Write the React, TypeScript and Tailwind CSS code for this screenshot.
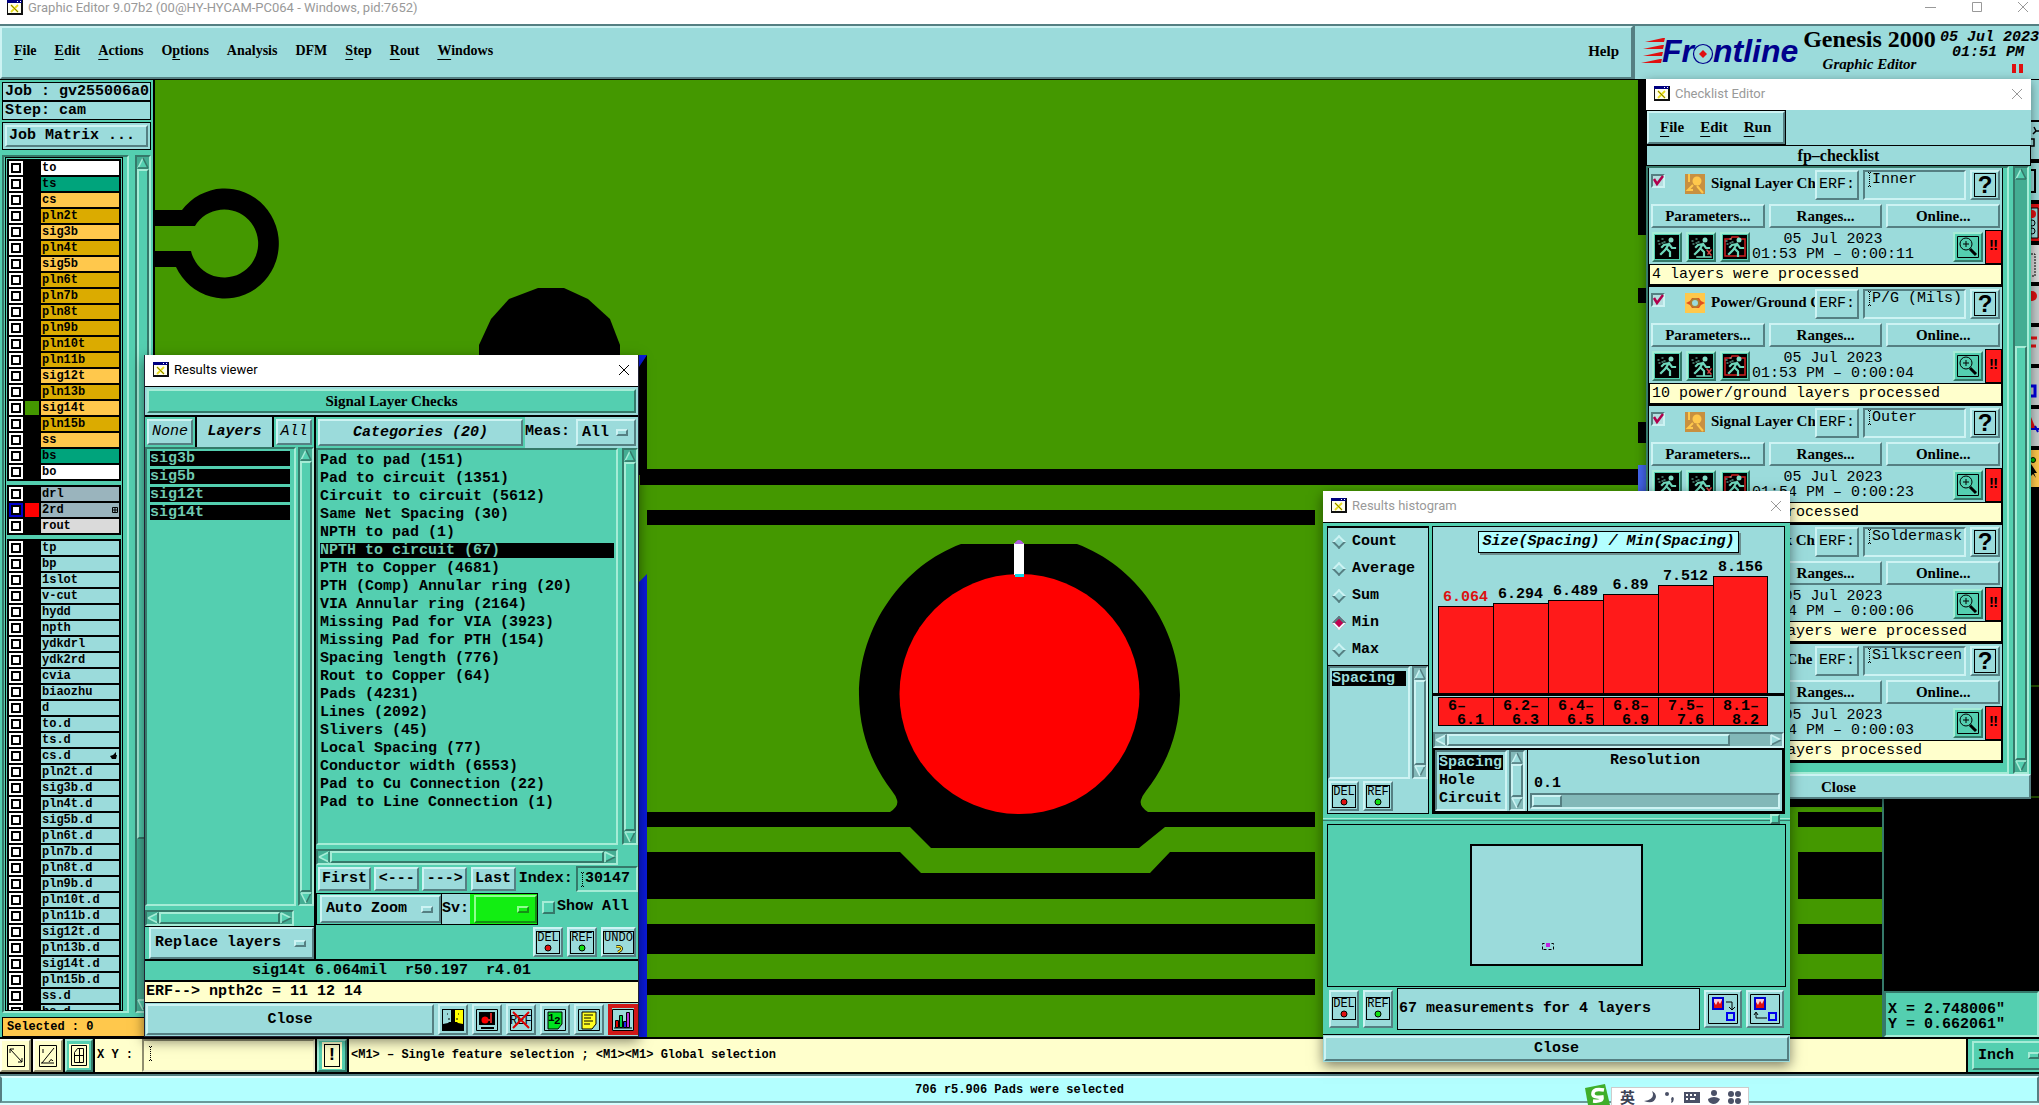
import React, { FunctionComponent } from "react";
import clsx from "clsx";

const tealRaised =
  "border-2 border-t-[#cdf3f3] border-l-[#cdf3f3] border-b-[#557f82] border-r-[#557f82] bg-[#9bdbdb]";
const tealSunken =
  "border-2 border-t-[#557f82] border-l-[#557f82] border-b-[#cdf3f3] border-r-[#cdf3f3]";
const greenRaised =
  "border-2 border-t-[#a5ecd6] border-l-[#a5ecd6] border-b-[#35796a] border-r-[#35796a] bg-[#54cfb0]";
const greenSunken =
  "border-2 border-t-[#35796a] border-l-[#35796a] border-b-[#a5ecd6] border-r-[#a5ecd6]";
const creamRaised =
  "border-2 border-t-[#ffffee] border-l-[#ffffee] border-b-[#908f70] border-r-[#908f70] bg-[#ffffcc]";
const serif = "font-['Liberation_Serif',serif]";
const sans = "font-['Roboto','Noto_Sans_CJK_SC',sans-serif] font-normal";

const WindowIcon: FunctionComponent = () => (
  <svg width="16" height="15" viewBox="0 0 16 15" className="shrink-0">
    <rect width="16" height="15" fill="#111" />
    <rect x="1" y="3" width="13" height="10" fill="#fffff0" />
    <rect x="0" y="0" width="15" height="3" fill="#000080" />
    <rect x="10" y="1" width="1" height="1" fill="#fff" />
    <rect x="13" y="1" width="1" height="1" fill="#fff" />
    <path d="M4 5l7 7M11 5l-7 7" stroke="#e8dc20" strokeWidth="1.8" />
    <path d="M4 5l7 7" stroke="#555500" strokeWidth="0.7" />
  </svg>
);

const CloseIcon: FunctionComponent = () => (
  <svg width="12" height="12" viewBox="0 0 12 12" className="shrink-0">
    <path d="M1 1l10 10M11 1L1 11" stroke="currentColor" fill="none" />
  </svg>
);

const Caret: FunctionComponent = () => (
  <svg width="5" height="15" viewBox="0 0 5 15" className="shrink-0">
    <path d="M1 .5h3M1 14.5h3M2.5 1v13" stroke="#000" strokeDasharray="1 1" />
  </svg>
);

type TitleBarProps = { title: string; active?: boolean };

const TitleBar: FunctionComponent<TitleBarProps> = ({ title, active }) => (
  <div
    className={clsx(
      "flex h-[31px] shrink-0 items-center bg-white pl-2 pr-2 pb-0.5 text-[13px]",
      sans,
      active ? "text-black" : "text-[#999]"
    )}
  >
    <WindowIcon />
    <span className="flex-1 pl-[5px]">{title}</span>
    <button type="button" aria-label={`Close ${title}`}>
      <CloseIcon />
    </button>
  </div>
);

type ArrowProps = { dir: "up" | "down" | "left" | "right"; green?: boolean };

const Arrow: FunctionComponent<ArrowProps> = ({ dir, green }) => {
  const light = green ? "#a5ecd6" : "#cdf3f3";
  const dark = green ? "#35796a" : "#557f82";
  const face = green ? "#54cfb0" : "#9bdbdb";
  return (
    <svg
      width="12"
      height="12"
      viewBox="0 0 12 12"
      className={clsx(
        "shrink-0",
        dir === "down" && "rotate-180",
        dir === "left" && "-rotate-90",
        dir === "right" && "rotate-90"
      )}
    >
      <path d="M6 1L1 11h10z" fill={face} />
      <path d="M6 1L1 11" stroke={dir === "down" ? dark : light} strokeWidth="1.6" />
      <path d="M6 1l5 10" stroke={dir === "down" || dir === "left" ? light : dark} strokeWidth="1.6" />
      <path d="M1 11h10" stroke={dir === "down" || dir === "right" ? light : dark} strokeWidth="1.6" />
    </svg>
  );
};

type ScrollProps = {
  horizontal?: boolean;
  green?: boolean;
  lead?: string;
  tail?: string;
  className?: string;
};

const ScrollBar: FunctionComponent<ScrollProps> = ({ horizontal, green, lead, tail, className }) => (
  <div
    className={clsx(
      "flex shrink-0 overflow-hidden",
      horizontal ? "h-4" : "w-4 flex-col",
      green ? greenSunken : tealSunken,
      green ? "bg-[#44ad93]" : "bg-[#82b8b8]",
      className
    )}
  >
    <Arrow dir={horizontal ? "left" : "up"} green={green} />
    {lead && <div className={lead} />}
    <div className={clsx("flex-1", green ? greenRaised : tealRaised)} />
    {tail && <div className={tail} />}
    <Arrow dir={horizontal ? "right" : "down"} green={green} />
  </div>
);

type OptionProps = { label: string; value: string; className?: string; mark?: string };

const OptionMenu: FunctionComponent<OptionProps> = ({ label, value, className, mark }) => (
  <div className={clsx("flex items-center pr-1.5", className ?? tealRaised)}>
    <select aria-label={label} className="min-w-0 flex-1 appearance-none bg-transparent pl-1">
      <option>{value}</option>
    </select>
    <span className={clsx("h-[7px] w-3 shrink-0", mark ?? tealRaised)} />
  </div>
);

type TagButtonProps = { text: string; color?: string; tall?: boolean };

// small DEL / REF / UNDO buttons
const TagButton: FunctionComponent<TagButtonProps> = ({ text, color, tall }) => (
  <button
    type="button"
    className={clsx(
      "flex items-center justify-center",
      tealRaised,
      text === "UNDO" ? "w-[35px]" : "w-[30px]",
      tall ? "h-[38px]" : "h-[30px]"
    )}
  >
    <span className="flex h-[23px] flex-col items-center border border-black font-normal">
      <span className="text-[12px] leading-[12px]">{text}</span>
      {color ? (
        <svg width="8" height="8" viewBox="0 0 8 8">
          <circle cx="4" cy="4" r="3" fill={color} stroke="#000" />
        </svg>
      ) : (
        <svg width="10" height="9" viewBox="0 0 10 10">
          <path d="M2 3h4q3 1 1 4l-3 2" stroke="#000" strokeWidth="3" fill="none" />
          <path d="M2 3h4q3 1 1 4l-3 2" stroke="#ffee33" strokeWidth="1.5" fill="none" />
        </svg>
      )}
    </span>
  </button>
);

type Layer = { name: string; bg: string; swatch?: string; active?: boolean; mark?: "grid" | "hand" };

const white = "bg-white";
const solder = "bg-[#00a47c]";
const signal = "bg-[#ffc84c]";
const plane = "bg-[#dbab00]";
const drill = "bg-[#9ab4bd]";
const doc = "bg-[#9bdbdb]";

const boardLayers: Layer[] = [
  { name: "to", bg: white },
  { name: "ts", bg: solder },
  { name: "cs", bg: signal },
  { name: "pln2t", bg: plane },
  { name: "sig3b", bg: signal },
  { name: "pln4t", bg: plane },
  { name: "sig5b", bg: signal },
  { name: "pln6t", bg: plane },
  { name: "pln7b", bg: plane },
  { name: "pln8t", bg: plane },
  { name: "pln9b", bg: plane },
  { name: "pln10t", bg: plane },
  { name: "pln11b", bg: plane },
  { name: "sig12t", bg: signal },
  { name: "pln13b", bg: plane },
  { name: "sig14t", bg: signal, swatch: "bg-[#449800]" },
  { name: "pln15b", bg: plane },
  { name: "ss", bg: signal },
  { name: "bs", bg: solder },
  { name: "bo", bg: white },
];

const drillLayers: Layer[] = [
  { name: "drl", bg: drill },
  { name: "2rd", bg: drill, swatch: "bg-[#ff0000]", active: true, mark: "grid" },
  { name: "rout", bg: "bg-[#dadada]" },
];

const docLayers: Layer[] = [
  "tp", "bp", "1slot", "v-cut", "hydd", "npth", "ydkdrl", "ydk2rd", "cvia", "biaozhu", "d",
  "to.d", "ts.d", "cs.d", "pln2t.d", "sig3b.d", "pln4t.d", "sig5b.d", "pln6t.d", "pln7b.d",
  "pln8t.d", "pln9b.d", "pln10t.d", "pln11b.d", "sig12t.d", "pln13b.d", "sig14t.d", "pln15b.d",
  "ss.d", "bs.d",
].map((name) => ({ name, bg: doc, mark: name === "cs.d" ? "hand" : undefined }));

const LayerGroup: FunctionComponent<{ layers: Layer[] }> = ({ layers }) => (
  <ul className="flex shrink-0 flex-col gap-0.5 bg-black p-0.5 text-xs leading-[14px]">
    {layers.map((layer) => (
      <li key={layer.name} className="flex h-3.5">
        <input
          type="checkbox"
          id={`layer-${layer.name}`}
          className={clsx(
            "h-3.5 w-3.5 appearance-none border-2 bg-white shadow-[inset_0_0_0_2px_#000]",
            layer.active ? "border-[#0000cc]" : "border-white"
          )}
        />
        <span className={clsx("ml-0.5 h-3.5 w-3.5", layer.swatch)} />
        <label
          htmlFor={`layer-${layer.name}`}
          className={clsx("ml-0.5 flex flex-1 items-center justify-between pl-px", layer.bg)}
        >
          {layer.name}
          {layer.mark === "grid" && (
            <svg width="7" height="6" viewBox="0 0 7 6">
              <path d="M.5 .5h5v5h-5zM3 0v6M0 3h6" stroke="#000" fill="none" />
            </svg>
          )}
          {layer.mark === "hand" && (
            <svg width="10" height="8" viewBox="0 0 10 8">
              <path d="M1 4l3-1 3-3v3h1l-1 4H3z" />
            </svg>
          )}
        </label>
      </li>
    ))}
  </ul>
);

const menus = ["File", "Edit", "Actions", "Options", "Analysis", "DFM", "Step", "Rout", "Windows"];

const MenuItem: FunctionComponent<{ name: string }> = ({ name }) => {
  if (name === "Analysis" || name === "DFM" || name === "Help") {
    return <button type="button">{name}</button>;
  }
  const at = name === "Options" ? 1 : 0;
  return (
    <button type="button">
      {name.slice(0, at)}
      <span className="underline underline-offset-4">{name[at]}</span>
      {name.slice(at + 1)}
    </button>
  );
};

const FrontlineLogo: FunctionComponent = () => (
  <svg width="162" height="36" viewBox="0 0 162 36" role="img" aria-label="Frontline">
    <g fill="#e01010">
      <path d="M4 6l18-4h2l-1 4z" />
      <path d="M2 13l19-4h2l-1 4z" />
      <path d="M2 20l18-4h2l-1 4z" />
      <path d="M0 27l19-4h2l-1 4z" />
    </g>
    <g
      fill="#00008c"
      fontFamily="Liberation Sans, sans-serif"
      fontSize="32"
      fontWeight="bold"
      fontStyle="italic"
    >
      <text x="21" y="26">Fr</text>
      <text x="72" y="26">ntline</text>
    </g>
    <circle cx="62" cy="18" r="9.500" fill="#9bdbdb" stroke="#00008c" strokeWidth="1.2" />
    <path d="M62 14l4 4-4 4-4-4z" fill="#e01010" />
  </svg>
);

const Header: FunctionComponent = () => (
  <header className="flex h-14 shrink-0 border-b border-black border-t-2 border-t-[#557f82] bg-[#9bdbdb]">
    <nav
      className={clsx("flex flex-1 items-center gap-[18px] pb-1 pl-3 pr-3 text-[14px]", serif, tealRaised)}
    >
      {menus.map((name) => (
        <MenuItem key={name} name={name} />
      ))}
      <span className="ml-auto text-[15px]">
        <MenuItem name="Help" />
      </span>
    </nav>
    <div className="flex w-[406px] border-l-2 border-[#557f82] pl-1.5">
      <div className="pt-2.5">
        <FrontlineLogo />
      </div>
      <div className={clsx("flex w-[134px] flex-col items-center", serif)}>
        <h1 className="whitespace-nowrap text-2xl leading-[26px]">Genesis 2000</h1>
        <p className="text-[15px] leading-6 italic">Graphic Editor</p>
      </div>
      <div className="ml-1 flex-1 pt-1 leading-[15px] italic">
        <p className="whitespace-nowrap">05 Jul 2023</p>
        <p className="whitespace-nowrap pl-3">01:51 PM</p>
        <div className="flex justify-end gap-[3px] pr-4 pt-1">
          <span className="h-[9px] w-1 bg-[#e01010]" />
          <span className="h-[9px] w-1 bg-[#e01010]" />
        </div>
      </div>
    </div>
  </header>
);

const Sidebar: FunctionComponent = () => (
  <aside className="flex w-[155px] shrink-0 flex-col border-r-2 border-black bg-[#54cfb0] pl-0.5 pt-0.5">
    <div className="mr-0.5 border border-black bg-[#9bdbdb] pl-0.5 leading-[17px]">Job : gv255006a0</div>
    <div className="mr-0.5 border border-black bg-[#9bdbdb] pl-0.5 leading-[17px]">Step: cam</div>
    <div className="mr-0.5 mt-0.5 border border-black bg-[#9bdbdb] p-0.5">
      <button type="button" className={clsx("block w-full pl-0.5 text-left", tealRaised)}>
        Job Matrix ...
      </button>
    </div>
    <div className="mt-[5px] flex min-h-0 flex-1">
      <div className={clsx("flex w-[127px] flex-col overflow-hidden pl-px pr-1", greenSunken)}>
        <div className="flex min-h-0 flex-1 flex-col gap-1 overflow-hidden border border-black p-px pb-0">
          <LayerGroup layers={boardLayers} />
          <LayerGroup layers={drillLayers} />
          <LayerGroup layers={docLayers} />
        </div>
      </div>
      <ScrollBar green className="ml-1.5" tail="h-[160px]" />
    </div>
    <div className="mt-1 h-5 border border-black bg-[#ffc84c] pl-1 text-xs leading-[18px]">Selected : 0</div>
  </aside>
);

// board artwork, drawn in window coordinates and shifted to the canvas origin
const BoardCanvas: FunctionComponent = () => (
  <main className="min-w-0 flex-1 overflow-hidden bg-[#449800]">
    <svg width="100%" height="100%" role="img" aria-label="Board artwork">
      <g transform="translate(-155 -80)">
        <path d="M155 210h27a54 55 0 1 1-6 57h-21v-16h36a34 34 0 1 0 4-25h-40z" />
        <path d="M479 360v-15l12-26 18-20 29-11h26l24 11 22 20 10 26v15z" />
        <path d="M639 355h8v120h-8z" />
        <path d="M639 355h8l-8 12zM639 582l8-8v463h-8z" fill="#0a1be0" />
        <path d="M640 469h998v16H640zM647 510h668v15H647z" />
        <path d="M647 812h243q9-6 7-12-1-4-5-9a160 160 0 0 1-33-96c0-70 45-130 102-151h116c57 21 103 81 103 151a160 160 0 0 1-34 96q-4 5-5 9-2 6 7 12h167v15h-150l-26 21H931l-21-21H647z" />
        <path d="M647 852h253l21 21h229l20-21h145v47H647z" />
        <path d="M647 924h668v30H647zM647 979h668v16H647z" />
        <path d="M1790 790h92v17h-92zM1798 812h84v15h-84zM1798 852h84v47h-84zM1798 924h84v30h-84zM1798 979h84v16h-84z" />
        <path d="M1638 80h10v155h-10zM1638 288h10v15h-10zM1638 422h10v21h-10z" />
        <path d="M1638 465h10v30h-10z" fill="#4466ee" />
        <circle cx="1019.500" cy="694" r="120" fill="#ff0000" />
        <path d="M1014 543h10v32h-10z" fill="#fff" />
        <path d="M1014 544q5-8 10 0z" fill="#b060e0" />
        <path d="M1015 574h9v3h-9z" fill="#10d8e8" />
      </g>
    </svg>
  </main>
);

const tools = [
  { id: "snap", bg: "bg-[#9bdbdb]", art: <path d="M2 12l3-3h3M5 9l-2-4M0 17h3v7H0" stroke="#000" strokeWidth="1.5" fill="none" /> },
  { id: "frame", bg: "bg-[#9bdbdb]", art: <path d="M0 7h4v22H0" stroke="#000" strokeWidth="2" fill="none" /> },
  { id: "signal", bg: "bg-[#dd1111]", art: <><path d="M0 4h7v30H0z" fill="#9bdbdb" stroke="#000" /><circle cx="1" cy="10" r="4" fill="#d11" /><circle cx="1" cy="19" r="3" fill="none" stroke="#000" /><circle cx="1" cy="27" r="3" fill="none" stroke="#000" /></> },
  { id: "select", bg: "bg-[#dadada]", art: <path d="M0 9h4v22H0" stroke="#000" strokeDasharray="2 1" fill="none" /> },
  { id: "point", bg: "bg-[#c4cccc]", art: <circle cx="1" cy="10" r="5" fill="#d11" /> },
  { id: "lines", bg: "bg-[#c4cccc]", art: <path d="M0 11h6M0 19h5" stroke="#d11" strokeWidth="3" /> },
  { id: "corner", bg: "bg-[#c4cccc]", art: <path d="M0 18h4v10H0" stroke="#0000dd" strokeWidth="3" fill="none" /> },
  { id: "measure", bg: "bg-[#c4cccc]", art: <><path d="M0 8l5 12H0z" fill="#d11" /><path d="M0 20h8M4 17l3 6" stroke="#0000cc" strokeWidth="2" /></> },
  { id: "pick", bg: "bg-[#ffc84c]", art: <><circle cx="2" cy="10" r="2.500" fill="#0b0" stroke="#000" /><path d="M0 14l6 9H3l2 5-3-4-2 2z" /></> },
];

const RightColumn: FunctionComponent = () => (
  <aside className="flex w-[157px] shrink-0 flex-col border-l-2 border-[#35796a] bg-black">
    <div className="h-10 bg-[#9bdbdb]" />
    {tools.map((tool) => (
      <button
        key={tool.id}
        type="button"
        aria-label={tool.id}
        className={clsx("flex h-[41px] justify-end border-b-2 border-t-2 border-black", tool.bg)}
      >
        <svg width="8" height="37" viewBox="0 0 8 37">
          {tool.art}
        </svg>
      </button>
    ))}
    <div className="flex-1">
      <svg width="100%" height="100%" role="img" aria-label="Overview">
        <path d="M0 197h160M0 308h160" stroke="#449800" />
      </svg>
    </div>
    <div className={clsx("h-[46px] bg-[#54cfb0] pl-0.5 pt-[9px] leading-[15px]", greenSunken)}>
      <p>X = 2.748006"</p>
      <p>Y = 0.662061"</p>
    </div>
  </aside>
);

const CommandBar: FunctionComponent = () => (
  <div className="flex h-[37px] shrink-0 border-b-2 border-t-2 border-black bg-[#ffffcc] text-xs">
    <div className="flex gap-0.5 bg-black pr-0.5">
      <button type="button" aria-label="Snap to point" className={clsx("flex w-[31px] items-center justify-center", creamRaised)}>
        <svg width="22" height="22" viewBox="0 0 22 22" fill="none" stroke="#000">
          <path d="M2.500 .5h17v21h-17zM5 4l12 13M5 8V4h4M17 13v4h-4" />
        </svg>
      </button>
      <button type="button" aria-label="Snap to angle" className={clsx("flex w-[30px] items-center justify-center", creamRaised)}>
        <svg width="22" height="22" viewBox="0 0 22 22" fill="none" stroke="#000">
          <path d="M2.500 .5h17v21h-17zM5 18L17 3M6 4v4M12 17q2-4 4-1M4 18h13" />
        </svg>
      </button>
      <button type="button" aria-label="Grid" className={clsx("flex w-[28px] items-center justify-center", greenRaised)}>
        <svg width="20" height="24" viewBox="0 0 20 24" fill="none" stroke="#000">
          <rect width="20" height="24" fill="#ffffcc" stroke="none" />
          <path d="M2.500 1.500h15v20h-15zM5.500 8.500l3-4h6v14h-9zM10.500 4v14M5 11.500h10" />
        </svg>
      </button>
    </div>
    <label htmlFor="xy" className="w-[47px] whitespace-pre pl-0.5 leading-[33px]">X Y :</label>
    <div className="flex w-[173px] items-center border-2 border-b-[#eeeecc] border-l-[#908f70] border-r-[#eeeecc] border-t-[#908f70] pb-1 pl-1">
      <Caret />
      <input id="xy" type="text" className="w-full bg-transparent outline-none" />
    </div>
    <div className="bg-black px-0.5">
      <button type="button" aria-label="Alert" className={clsx("flex h-full w-[30px] items-center justify-center", greenRaised)}>
        <span className="flex h-[27px] w-5 items-center justify-center bg-[#ffffcc]">
          <span className="h-[23px] w-4 border border-black text-lg leading-5">!</span>
        </span>
      </button>
    </div>
    <p className="flex-1 pl-0.5 leading-[33px]">
      {"<M1> – Single feature selection ; <M1><M1> Global selection"}
    </p>
    <div className="flex w-[73px] overflow-hidden border-l-2 border-black bg-[#54cfb0] py-0.5 pl-1 text-[15px]">
      <OptionMenu label="Units" value="Inch" className={clsx("w-[76px] shrink-0", greenRaised)} mark={greenRaised} />
    </div>
  </div>
);

const InputMethodBar: FunctionComponent = () => (
  <div className="absolute bottom-0 right-[290px] flex h-[21px] items-end text-[#3c4254]">
    <svg width="26" height="21" viewBox="0 0 26 21">
      <path d="M0 4L20 0l5 21H3z" fill="#3fae2a" />
      <path d="M19 6Q9 4 8 9t9 4q1 5-9 4" stroke="#fff" strokeWidth="3.500" fill="none" />
    </svg>
    <div className="flex h-[18px] w-[138px] items-center gap-2 border border-b-0 border-[#ccc] bg-white pl-2">
      <span className="font-['Noto_Sans_CJK_SC',sans-serif] text-[15px] leading-4 font-bold">英</span>
      <svg width="104" height="14" viewBox="0 0 104 14" fill="#4a5066">
        <path d="M9 1q4 8-8 10 10 4 12-4 0-4-4-6z" />
        <circle cx="24" cy="4" r="2" />
        <path d="M29 7q3 0 1 5l-2 1q1-3 0-4z" />
        <path d="M41 2h16v11H41zM43 4v2h2V4zM47 4v2h2V4zM51 4v2h2V4zM43 8v2h2V8zM47 8v2h5V8z" fillRule="evenodd" />
        <circle cx="71" cy="3" r="3" />
        <path d="M65 9q6-4 12 0-2 5-7 5-5-1-5-5z" />
        <circle cx="88" cy="4" r="3" />
        <circle cx="95" cy="4" r="3" />
        <circle cx="88" cy="11" r="3" />
        <circle cx="95" cy="11" r="3" />
      </svg>
    </div>
  </div>
);

const categories = [
  "Pad to pad (151)",
  "Pad to circuit (1351)",
  "Circuit to circuit (5612)",
  "Same Net Spacing (30)",
  "NPTH to pad (1)",
  "NPTH to circuit (67)",
  "PTH to Copper (4681)",
  "PTH (Comp) Annular ring (20)",
  "VIA Annular ring (2164)",
  "Missing Pad for VIA (3923)",
  "Missing Pad for PTH (154)",
  "Spacing length (776)",
  "Rout to Copper (64)",
  "Pads (4231)",
  "Lines (2092)",
  "Slivers (45)",
  "Local Spacing (77)",
  "Conductor width (6553)",
  "Pad to Cu Connection (22)",
  "Pad to Line Connection (1)",
];

const actions = [
  {
    id: "Compare",
    art: <><path d="M0 0h22v22H0z" /><path d="M1 1h8v12H7l-1 1-5 1z" fill="#9bdbdb" /><path d="M13 1h8v14l-5-1-1-1h-2z" fill="#ffff00" /><path d="M5 5h1M16 5h1M6 10h2M14 10h2" stroke="#000" /></>,
  },
  {
    id: "Record",
    art: <><path d="M.5 .5h21v21H.5z" fill="#9bdbdb" stroke="#000" /><path d="M3 3h16v13H3zM5 18h13v2H5z" /><circle cx="9" cy="11" r="3.500" fill="#f00" /><path d="M15 4v10M11 11h4" stroke="#c22" strokeWidth="2" /></>,
  },
  {
    id: "Clear reference",
    art: <><path d="M.5 .5h21v21H.5z" fill="#9bdbdb" stroke="#000" /><text x="0" y="15" fontSize="12" fontWeight="normal">REF</text><path d="M3 3l16 16M19 3L3 19" stroke="#d00" strokeWidth="2" /></>,
  },
  {
    id: "Number",
    art: <><path d="M.5 .5h21v21H.5z" fill="#9bdbdb" stroke="#000" /><path d="M4 3h14v12l-4 5H4z" fill="#00e020" stroke="#000" /><text x="4" y="12" fontSize="11">1</text><text x="10" y="15" fontSize="11">2</text></>,
  },
  {
    id: "Report",
    art: <><path d="M.5 .5h21v21H.5z" fill="#9bdbdb" stroke="#000" /><path d="M4 3h14v12l-4 5H4z" fill="#ffff22" stroke="#000" /><path d="M6 6h9M6 9h7M6 12h9M6 15h6" stroke="#000" /></>,
  },
  {
    id: "Histogram",
    art: <><path d="M.5 .5h21v21H.5z" fill="#9bdbdb" stroke="#000" /><path d="M3.500 11.500h3v7h-3z" fill="#d00" stroke="#000" /><path d="M7.500 6.500h3v12h-3z" fill="#0c4" stroke="#000" /><path d="M11.500 12.500h3v6h-3z" fill="#22e" stroke="#000" /><path d="M14.500 3.500h3v15h-3z" fill="#b3d" stroke="#000" /><path d="M2 19h18" stroke="#000" /></>,
  },
];

const ResultsViewer: FunctionComponent = () => (
  <section className="absolute left-36 top-[355px] flex h-[682px] w-[495px] flex-col border border-t-0 border-[#223] bg-[#54cfb0] shadow-[0_4px_12px_rgba(0,0,0,0.5)]">
    <TitleBar title="Results viewer" active />
    <div className="border-b-2 border-t border-black bg-[#9bdbdb] p-0.5">
      <h2 className={clsx("text-center text-[15px] leading-[20px]", serif, greenRaised)}>Signal Layer Checks</h2>
    </div>
    <div className="flex min-h-0 flex-1 gap-0.5 bg-black">
      <div className="flex w-[169px] flex-col bg-[#54cfb0]">
        <div className="flex h-[30px] gap-0.5 bg-black italic">
          <div className="flex w-[50px] bg-[#54cfb0] p-0.5">
            <button type="button" className={clsx("flex-1 font-normal", tealRaised)}>None</button>
          </div>
          <div className="flex-1 bg-[#9bdbdb] text-center leading-[30px]">Layers</div>
          <div className="flex w-10 bg-[#54cfb0] p-0.5">
            <button type="button" className={clsx("flex-1 font-normal", tealRaised)}>All</button>
          </div>
        </div>
        <div className="flex min-h-0 flex-1">
          <ul className={clsx("flex flex-1 flex-col gap-[3px] py-0.5 pl-[3px] pr-1 leading-[15px]", greenSunken)}>
            {["sig3b", "sig5b", "sig12t", "sig14t"].map((name) => (
              <li key={name} className="bg-black text-[#6fc9b0]">
                {name}
              </li>
            ))}
          </ul>
          <ScrollBar green className="ml-0.5" />
        </div>
        <ScrollBar green horizontal className="mr-5 mt-1" />
        <div className="flex h-[33px] border-t border-black pl-1">
          <OptionMenu label="Layer mode" value="Replace layers" className={clsx("flex-1", tealRaised)} />
        </div>
      </div>
      <div className="flex min-w-0 flex-1 flex-col bg-[#54cfb0]">
        <div className="flex h-[31px] bg-[#9bdbdb]">
          <div className="flex w-[209px] bg-[#54cfb0] p-0.5">
            <button type="button" className={clsx("flex-1 italic", tealRaised)}>Categories (20)</button>
          </div>
          <span className="flex-1 leading-[30px]">Meas:</span>
          <div className="flex w-[62px] py-0.5 pr-0.5">
            <OptionMenu label="Meas" value="All" className={clsx("flex-1", tealRaised)} />
          </div>
        </div>
        <div className="flex min-h-0 flex-1">
          <ul className={clsx("flex flex-1 flex-col gap-[3px] px-0.5 pt-[3px] leading-[15px]", greenSunken)}>
            {categories.map((name) => (
              <li key={name} className={clsx(name.startsWith("NPTH to c") && "bg-black text-[#6fc9b0]")}>
                {name}
              </li>
            ))}
          </ul>
          <ScrollBar green className="ml-1" />
        </div>
        <ScrollBar green horizontal className="mr-5 mt-1" />
        <div className="flex h-[28px] items-center justify-between pl-0.5">
          {["First", "<---", "--->", "Last"].map((name) => (
            <button
              key={name}
              type="button"
              className={clsx("h-6 leading-5", name === "First" ? "w-[53px]" : "w-[45px]", tealRaised)}
            >
              {name}
            </button>
          ))}
          <label htmlFor="index">Index:</label>
          <div className={clsx("flex h-[26px] w-[62px] items-center pl-0.5", greenSunken)}>
            <Caret />
            <input id="index" defaultValue="30147" className="w-full min-w-0 bg-transparent leading-4" />
          </div>
        </div>
        <div className="flex h-8">
          <div className="flex w-[126px] border border-black py-px pl-[3px]">
            <OptionMenu label="Zoom mode" value="Auto Zoom" className={clsx("flex-1", tealRaised)} />
          </div>
          <span className="w-7 border-y border-black bg-[#9bdbdb] leading-[30px]">Sv:</span>
          <div className="flex w-[68px] border-y border-r border-black bg-[#12ee12] py-px pl-1">
            <OptionMenu
              label="Severity"
              value=""
              className="flex-1 border-2 border-b-[#159015] border-l-[#90ff90] border-r-[#159015] border-t-[#90ff90]"
              mark="border-2 border-b-[#159015] border-l-[#90ff90] border-r-[#159015] border-t-[#90ff90]"
            />
          </div>
          <label className="flex items-center gap-0.5 pb-1 pl-1">
            <input type="checkbox" className={clsx("h-[13px] w-[13px] appearance-none", greenRaised)} />
            Show All
          </label>
        </div>
        <div className="flex h-[34px] items-center justify-end gap-1 pr-0.5">
          <TagButton text="DEL" color="#e01010" />
          <TagButton text="REF" color="#10e010" />
          <TagButton text="UNDO" />
        </div>
      </div>
    </div>
    <p className="whitespace-pre border-y-2 border-black text-center leading-[19px]">
      {"sig14t 6.064mil  r50.197  r4.01"}
    </p>
    <p className="border-b border-black bg-[#ffffcc] pl-px leading-[20px]">{"ERF--> npth2c = 11 12 14"}</p>
    <div className="flex h-[33px] gap-1 bg-[#9bdbdb] py-px pl-px">
      <button type="button" className={clsx("flex-1", tealRaised)}>Close</button>
      {actions.map((action) => (
        <button
          key={action.id}
          type="button"
          aria-label={action.id}
          className={clsx(
            "flex w-[30px] items-center justify-center",
            action.id === "Histogram" ? "border-4 border-[#d01818]" : tealRaised
          )}
        >
          <svg width="22" height="22" viewBox="0 0 22 22" className="shrink-0">
            {action.art}
          </svg>
        </button>
      ))}
    </div>
  </section>
);

type Check = {
  name: string;
  erf: string;
  time: string;
  result: string;
  power?: boolean;
};

const checks: Check[] = [
  { name: "Signal Layer Ch", erf: "Inner", time: "01:53 PM – 0:00:11", result: "4 layers were processed" },
  { name: "Power/Ground C", erf: "P/G (Mils)", time: "01:53 PM – 0:00:04", result: "10 power/ground layers processed", power: true },
  { name: "Signal Layer Ch", erf: "Outer", time: "01:54 PM – 0:00:23", result: "4 layers were processed" },
  { name: "Solder Mask Ch", erf: "Soldermask", time: "01:54 PM – 0:00:06", result: "2 solder mask layers were processed" },
  { name: "Silk Screen Che", erf: "Silkscreen", time: "01:54 PM – 0:00:03", result: "2 silk screen layers processed" },
];

const Runner: FunctionComponent<{ kind: number }> = ({ kind }) => (
  <svg width="24" height="24" viewBox="0 0 24 24" fill="none" strokeLinecap="square">
    <rect width="24" height="24" fill="#000" />
    {kind === 2 && <path d="M2 4h6l1-2h6l1 2h6v17H2z" stroke="#d02020" strokeWidth="1.500" />}
    <circle cx="16" cy="5" r="2.500" fill="#7fdcc4" />
    <path d="M14 9l-4 6-4 4M12 14l3 3v4M14 9l-5 1-2 2M14 9l3 4h3" stroke="#6fd8bc" strokeWidth="2.200" />
    <path d="M3 6h1M7 4h1M9 7h1M4 9h1M7 8h1" stroke="#7fdcc4" />
    {kind === 1 && <path d="M8 22h14" stroke="#6fd8bc" strokeWidth="1.500" />}
    {kind === 1 && <path d="M18 15l4 5M22 15l-3 4" stroke="#d04040" strokeWidth="1.500" />}
  </svg>
);

const CheckItem: FunctionComponent<{ check: Check; id: number }> = ({ check, id }) => (
  <li className="h-[119px] border-b-[3px] border-black bg-[#9bdbdb] pt-0.5">
    <div className="flex h-[30px] px-0.5">
      <span className="mt-1 grid h-[14px] w-[14px]">
        <input
          type="checkbox"
          defaultChecked
          aria-label={`${check.name} ${id + 1}`}
          className={clsx("col-start-1 row-start-1 h-3.5 w-3.5 appearance-none bg-[#b5dfe0]", tealSunken)}
        />
        <svg viewBox="0 0 14 14" className="pointer-events-none col-start-1 row-start-1">
          <path d="M3 5l3 5 6-8" stroke="#b0004c" strokeWidth="2.500" fill="none" />
        </svg>
      </span>
      <svg width="20" height="20" viewBox="0 0 20 20" className="ml-5 mt-1 shrink-0">
        {check.power ? (
          <>
            <path d="M0 0h20v20H0z" fill="#ffc84c" />
            <path d="M7 5h7l2 3 4 2-4 2-2 3H7l-2-3-4-2 4-2z" fill="#e05020" />
            <circle cx="10" cy="10" r="4" fill="#9bdbdb" stroke="#b08030" strokeWidth="2" />
          </>
        ) : (
          <>
            <path d="M0 0h20v20H0z" fill="#c89040" />
            <circle cx="12" cy="7" r="4.500" fill="#ffc84c" />
            <path d="M4 0v8M8 11l-5 5h5M12 12l6 7" stroke="#ffc84c" strokeWidth="2" fill="none" />
          </>
        )}
      </svg>
      <span className={clsx("ml-1.5 w-[102px] whitespace-nowrap text-[15px] leading-[26px]", serif)}>
        {check.name}
      </span>
      <label htmlFor={`erf-${id}`} className={clsx("ml-0.5 w-[44px] text-center leading-[26px] font-normal", tealRaised)}>
        ERF:
      </label>
      <div className={clsx("ml-1 flex flex-1 items-start pl-0.5", tealSunken)}>
        <Caret />
        <input id={`erf-${id}`} defaultValue={check.erf} className="w-full min-w-0 bg-transparent leading-4 font-normal" />
      </div>
      <button type="button" aria-label="Help" className={clsx("ml-1 flex w-[30px] items-center justify-center", tealRaised)}>
        <span className="h-6 w-[22px] border border-black font-['Liberation_Sans',sans-serif] text-2xl leading-[22px]">?</span>
      </button>
    </div>
    <div className={clsx("mt-1 flex h-6 gap-1 px-0.5 text-[15px]", serif)}>
      <button type="button" className={clsx("flex-1 leading-[18px]", tealRaised)}>Parameters...</button>
      <button type="button" className={clsx("flex-1 leading-[18px]", tealRaised)}>Ranges...</button>
      <button type="button" className={clsx("flex-1 leading-[18px]", tealRaised)}>Online...</button>
    </div>
    <div className="mt-0.5 flex h-[34px] items-center pl-[3px]">
      <div className="flex gap-1">
        {[0, 1, 2].map((kind) => (
          <button
            key={kind}
            type="button"
            aria-label={["Run", "Run on features", "Run on profile"][kind]}
            className={clsx("flex h-[30px] w-[30px] items-center justify-center", greenRaised)}
          >
            <Runner kind={kind} />
          </button>
        ))}
      </div>
      <p className="ml-0.5 whitespace-nowrap text-center leading-[15px] font-normal">
        05 Jul 2023
        <br />
        {check.time}
      </p>
      <button type="button" aria-label="View results" className={clsx("ml-auto flex h-[30px] w-[30px] items-center justify-center", greenRaised)}>
        <svg width="22" height="22" viewBox="0 0 22 22" fill="none" stroke="#000">
          <path d="M.5 .5h21v21H.5z" />
          <circle cx="9" cy="8" r="6" />
          <path d="M6 8h6M9 5v6" />
          <path d="M13 13l6 6" strokeWidth="3" />
        </svg>
      </button>
      <span className="ml-0.5 flex h-[34px] w-[17px] items-center justify-center border border-black bg-[#ff1a1a] text-[15px]">
        ‼
      </span>
    </div>
    <p className="h-5 overflow-hidden whitespace-nowrap border border-b-0 border-black bg-[#ffffcc] pl-0.5 leading-5 font-normal">
      {check.result}
    </p>
  </li>
);

const ChecklistEditor: FunctionComponent = () => (
  <section className="absolute right-2 top-[79px] flex h-[720px] w-[385px] flex-col bg-[#9bdbdb] shadow-[0_3px_10px_rgba(0,0,0,0.45)]">
    <TitleBar title="Checklist Editor" />
    <div className="flex h-[35px]">
      <nav className="border border-black">
        <div className={clsx("flex h-full items-center gap-4 pb-0.5 pl-[11px] pr-3 text-[15px]", serif, tealRaised)}>
          <MenuItem name="File" />
          <MenuItem name="Edit" />
          <MenuItem name="Run" />
        </div>
      </nav>
    </div>
    <h2 className={clsx("h-[21px] border border-black text-center text-[16px] leading-[19px]", serif)}>fp–checklist</h2>
    <div className="flex flex-1 bg-[#54cfb0] pr-0.5">
      <div className={clsx("flex-1 pr-1", greenSunken)}>
        <ul className="border-x border-black">
          {checks.map((check, i) => (
            <CheckItem key={check.erf} check={check} id={i} />
          ))}
        </ul>
      </div>
      <ScrollBar green className="ml-1" lead="h-[166px]" />
    </div>
    <button type="button" className={clsx("h-[25px] text-[15px] leading-5", serif, tealRaised)}>Close</button>
  </section>
);

const bars = [
  { value: "6.064", from: "6–", to: "6.1", height: 87 },
  { value: "6.294", from: "6.2–", to: "6.3", height: 90 },
  { value: "6.489", from: "6.4–", to: "6.5", height: 93 },
  { value: "6.89", from: "6.8–", to: "6.9", height: 99 },
  { value: "7.512", from: "7.5–", to: "7.6", height: 108 },
  { value: "8.156", from: "8.1–", to: "8.2", height: 117 },
];

const ResultsHistogram: FunctionComponent = () => (
  <section className="absolute right-[249px] top-[491px] flex h-[571px] w-[467px] flex-col bg-[#54cfb0] shadow-[0_4px_12px_rgba(0,0,0,0.5)]">
    <TitleBar title="Results histogram" />
    <div className="flex h-[292px] gap-[3px] border-t border-black pl-1 pr-[5px] pt-[3px]">
      <div className="flex w-[102px] flex-col border border-black bg-[#9bdbdb]">
        <fieldset className="border-b border-t border-black pb-0.5 pl-1">
          {["Count", "Average", "Sum", "Min", "Max"].map((name) => (
            <label key={name} className="flex h-[27px] items-center gap-2">
              <input
                type="radio"
                name="measure"
                defaultChecked={name === "Min"}
                className={clsx(
                  "ml-0.5 h-2.5 w-2.5 rotate-45 appearance-none checked:border-b-[#eefcfc] checked:border-l-[#557f82] checked:border-r-[#eefcfc] checked:border-t-[#557f82] checked:bg-[#c00050]",
                  tealRaised
                )}
              />
              {name}
            </label>
          ))}
        </fieldset>
        <div className="flex flex-1">
          <ul className={clsx("flex-1 pl-0.5 pr-0.5 pt-[3px]", tealSunken)}>
            <li className="bg-black leading-[15px] text-[#9bdbdb]">Spacing</li>
          </ul>
          <ScrollBar className="ml-0.5" />
        </div>
        <div className="flex gap-1 pb-0.5 pl-px pt-0.5">
          <TagButton text="DEL" color="#e01010" />
          <TagButton text="REF" color="#10e010" />
        </div>
      </div>
      <div className="flex flex-1 flex-col border border-black bg-[#9bdbdb]">
        <div className="flex h-[199px] flex-col items-center overflow-hidden pt-1">
          <h3 className="border border-black bg-[#b3ffff] px-[3px] leading-5 italic shadow-[2px_2px_0_#6d8f90]">
            Size(Spacing) / Min(Spacing)
          </h3>
          <div className="flex w-full flex-1 items-end border-b-[3px] border-black pl-[5px]">
            {bars.map((bar, i) => (
              <div key={bar.value} className="w-[55px] text-center leading-4">
                <span className={clsx(i === 0 && "text-[#dd1111]")}>{bar.value}</span>
                <div
                  className={clsx("border-l border-t border-black bg-[#ff1a1a]", i === 5 && "border-r")}
                  style={{ height: bar.height }}
                />
              </div>
            ))}
          </div>
          <div className="flex w-full pl-[5px] pt-px">
            {bars.map((bar, i) => (
              <div
                key={bar.value}
                className={clsx(
                  "h-[29px] w-[55px] border-y border-l border-black bg-[#ff1a1a] pl-[9px] pt-0.5 leading-[14px]",
                  i === 5 && "border-r"
                )}
              >
                <div>{bar.from}</div>
                <div className="pl-[9px]">{bar.to}</div>
              </div>
            ))}
          </div>
        </div>
        <ScrollBar horizontal className="mt-1.5" tail="w-10" />
        <div className="flex flex-1 border-2 border-black">
          <ul className={clsx("flex w-[72px] flex-col gap-[3px] pl-0.5 pt-[3px] leading-[15px]", tealSunken)}>
            <li className="mr-0.5 bg-black text-[#9bdbdb]">Spacing</li>
            <li>Hole</li>
            <li>Circuit</li>
          </ul>
          <ScrollBar className="mx-0.5" />
          <div className="flex flex-1 flex-col border-l border-black p-0.5">
            <label htmlFor="resolution" className="text-center">Resolution</label>
            <span className="pl-1 pt-1.5 leading-[15px]">0.1</span>
            <input
              id="resolution"
              type="range"
              min="0.1"
              max="1"
              step="0.1"
              defaultValue="0.1"
              className={clsx(
                "mt-0.5 h-4 w-full appearance-none bg-[#82b8b8] [&::-webkit-slider-thumb]:h-3 [&::-webkit-slider-thumb]:w-[30px] [&::-webkit-slider-thumb]:appearance-none [&::-webkit-slider-thumb]:border-2 [&::-webkit-slider-thumb]:border-b-[#557f82] [&::-webkit-slider-thumb]:border-l-[#cdf3f3] [&::-webkit-slider-thumb]:border-r-[#557f82] [&::-webkit-slider-thumb]:border-t-[#cdf3f3] [&::-webkit-slider-thumb]:bg-[#9bdbdb]",
                tealSunken
              )}
            />
          </div>
        </div>
      </div>
    </div>
    <div className="flex h-2.5 items-center">
      <div className="h-[3px] flex-1 border-b border-t border-b-[#35796a] border-t-[#a5ecd6]" />
      <span className={clsx("h-2.5 w-2.5", greenRaised)} />
      <div className="h-[3px] w-2.5 border-b border-t border-b-[#35796a] border-t-[#a5ecd6]" />
    </div>
    <div className="mx-1 flex flex-1 border border-black pt-[19px]">
      <div className="mx-auto h-[122px] w-[173px] border-2 border-black bg-[#9bdbdb] pl-[70px] pt-[97px]">
        <svg width="12" height="7" viewBox="0 0 12 7">
          <path d="M.5 6.500v-6h11v6z" fill="none" stroke="#000" strokeDasharray="3 2" />
          <path d="M4 0h4v4H4z" fill="#c020e0" />
        </svg>
      </div>
    </div>
    <div className="flex h-[47px] items-center gap-1 px-1.5 pb-1">
      <TagButton text="DEL" color="#e01010" tall />
      <TagButton text="REF" color="#10e010" tall />
      <p className="h-[42px] flex-1 border border-black bg-[#9bdbdb] pl-px leading-[40px]">67 measurements for 4 layers</p>
      {["Export", "Import"].map((name) => (
        <button key={name} type="button" aria-label={name} className={clsx("flex h-[38px] w-[38px] items-center justify-center", tealRaised)}>
          <svg width="30" height="30" viewBox="0 0 30 30" fill="none">
            <path d="M.5 .5h29v29H.5z" stroke="#000" />
            <path d="M5 4h10v11H5z" fill="#f8c8d8" stroke="#0000cc" strokeWidth="2" />
            <path d="M6 14V8l2 3 2-4 2 3 2-4v8z" fill="#e01010" />
            <path d="M19 19h7v7h-7z" stroke="#0000ee" strokeWidth="2" />
            {name === "Export" ? (
              <path d="M18 8h6v8M21 13l3 3 3-3" stroke="#000" />
            ) : (
              <path d="M17 24H6v-5M4 21l2-3 2 3" stroke="#000" />
            )}
          </svg>
        </button>
      ))}
    </div>
    <div className="border-t border-black bg-[#9bdbdb] p-px">
      <button type="button" className={clsx("block h-[25px] w-full leading-[21px]", tealRaised)}>Close</button>
    </div>
  </section>
);

const App: FunctionComponent = () => (
  <div className="relative flex h-screen w-full flex-col overflow-hidden bg-[#d8ffff] font-['Liberation_Mono',monospace] text-[15px] leading-[18px] font-bold text-black">
    <div className={clsx("flex h-6 shrink-0 items-start bg-white pl-[7px] text-[#999]", sans)}>
      <WindowIcon />
      <span className="flex-1 pl-[5px] text-[13px] leading-4">
        Graphic Editor 9.07b2 (00@HY-HYCAM-PC064 - Windows, pid:7652)
      </span>
      <div className="flex gap-[34px] pr-2.5 pt-px">
        <button type="button" aria-label="Minimize">
          <svg width="12" height="12" viewBox="0 0 12 12" className="block"><path d="M0 6.500h11" stroke="currentColor" /></svg>
        </button>
        <button type="button" aria-label="Maximize">
          <svg width="12" height="12" viewBox="0 0 12 12" className="block"><path d="M1.500 1.500h9v9h-9z" stroke="currentColor" fill="none" /></svg>
        </button>
        <button type="button" aria-label="Close">
          <CloseIcon />
        </button>
      </div>
    </div>
    <Header />
    <div className="flex min-h-0 flex-1">
      <Sidebar />
      <BoardCanvas />
      <RightColumn />
    </div>
    <CommandBar />
    <footer className="shrink-0 border-t-2 border-[#557f82] pb-0.5">
      <p className="h-[27px] border-2 border-b-[#6a9a9a] border-l-[#557f82] border-r-[#557f82] border-t-[#e0ffff] bg-[#b3ffff] text-center text-xs leading-6">
        706 r5.906 Pads were selected
      </p>
    </footer>
    <ResultsViewer />
    <ChecklistEditor />
    <ResultsHistogram />
    <InputMethodBar />
  </div>
);

export default App;
